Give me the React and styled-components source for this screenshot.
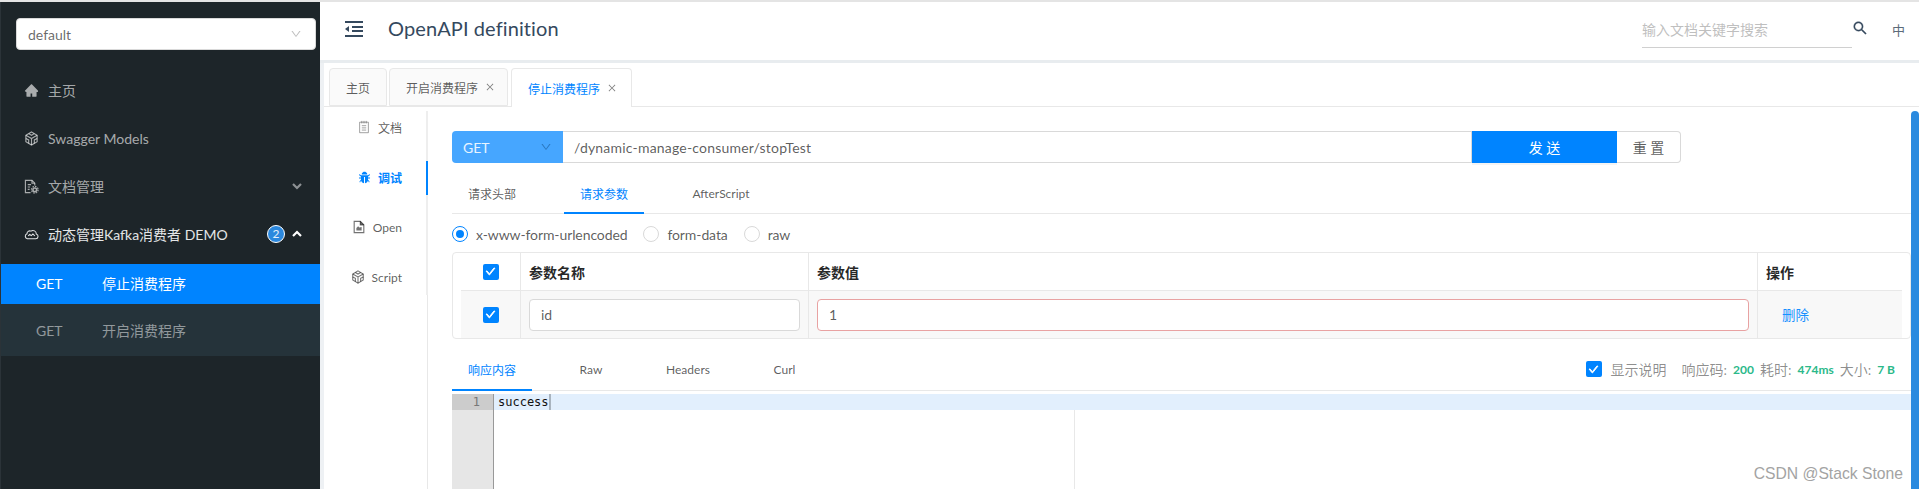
import React from 'react'
import styled, { createGlobalStyle } from 'styled-components'
import {
  AiFillHome,
  AiFillBug,
  AiOutlineDown,
  AiOutlineClose,
  AiOutlineCheck,
  AiOutlineSearch,
} from 'react-icons/ai'

const GlobalStyle = createGlobalStyle`
  html, body {
    margin: 0;
    height: 489px;
    overflow: hidden;
    background: #fff;
  }
  body {
    font-family: Lato, 'Noto Sans CJK SC', sans-serif;
    font-size: 14px;
    color: rgba(0, 0, 0, 0.65);
  }
  * { box-sizing: border-box; }
`

/* drawn icons, the packages have nothing close to these */
const HexIcon = ({ size = 15 }) => (
  <svg width={size} height={size} viewBox="0 0 16 16" fill="none" stroke="currentColor" strokeWidth="1.2">
    <path d="M8 1l6 3.5v7L8 15l-6-3.5v-7z" />
    <path d="M2 4.5L8 8l6-3.5M8 8v7M5 2.8l3 1.8 3-1.8M5 13.2V9.5L2 8M11 13.2V9.5L14 8" />
  </svg>
)

const DocGearIcon = () => (
  <svg width="15" height="15" viewBox="0 0 16 16" fill="none" stroke="currentColor" strokeWidth="1.2">
    <path d="M7 14.5H1.5v-13h7l3 3V7" />
    <path d="M8.5 1.5v3h3M4 6h3.5M4 8.5h2.5M4 11h2" />
    <circle cx="11.5" cy="11.5" r="2" strokeWidth="1.6" />
    <circle cx="11.5" cy="11.5" r="3.6" strokeWidth="1.2" strokeDasharray="1.6 1.2" />
  </svg>
)

const CloudIcon = () => (
  <svg width="15" height="15" viewBox="0 0 16 16" fill="none" stroke="currentColor" strokeWidth="1.1">
    <path d="M3.5 12.5h9a2.6 2.6 0 0 0 .6-5.1 3.6 3.6 0 0 0-5.7-3 3 3 0 0 0-4.2 2.9 2.7 2.7 0 0 0 .3 5.2z" />
    <path d="M4.5 9.5L6.2 8l1.6 1.2L9.5 7.4l2 2.1" />
  </svg>
)

const DocLinesIcon = () => (
  <svg width="14" height="14" viewBox="0 0 16 16" fill="none" stroke="currentColor" strokeWidth="1" opacity="0.75">
    <path d="M3 2.5h10v12H3z" />
    <path d="M5.5 1v3M8 1v3M10.5 1v3M5.5 6.5h5M5.5 9h5M5.5 11.5h5" />
  </svg>
)

const DocFoldIcon = () => (
  <svg width="14" height="14" viewBox="0 0 16 16" fill="none" stroke="currentColor" strokeWidth="1.3">
    <path d="M2.5 1.5h7l4 4v9h-11z" />
    <path d="M9.5 1.5v4h4" fill="currentColor" />
    <path d="M5 12V9l2-2 1.5 1.5L11 8v4z" fill="currentColor" stroke="none" />
  </svg>
)

const MenuFoldIcon = () => (
  <svg width="18" height="16" viewBox="0 0 18 16" fill="none" stroke="currentColor" strokeWidth="2">
    <path d="M0 1h18M7 6h11M7 10h11M0 15h18" />
    <path d="M4 5v6L0 8z" fill="currentColor" stroke="none" />
  </svg>
)

const Chevron = ({ up }) => (
  <svg width="10" height="8" viewBox="0 0 10 8" fill="none" stroke="currentColor" strokeWidth="2.2">
    <polyline points={up ? '1,6 5,2 9,6' : '1,2 5,6 9,2'} />
  </svg>
)

const Page = styled.div`
  position: relative;
  height: 489px;
  border-top: 2px solid #e4e4e4;
  display: flex;
  overflow: hidden;
`

/* sidebar */
const Sidebar = styled.aside`
  width: 320px;
  flex: none;
  background: #1d2529;
  border-left: 1px solid #2b3338;
`

const SelectBox = styled.div`
  height: 32px;
  margin: 16px 4px 0 15px;
  padding: 0 13px 0 11px;
  background: #fff;
  border: 1px solid #d9d9d9;
  border-radius: 4px;
  display: flex;
  align-items: center;
  justify-content: space-between;
  color: rgba(0, 0, 0, 0.6);
  svg { color: #bfbfbf; font-size: 12px; }
`

const Menu = styled.nav`
  margin: 17px 0 5px;
`

const MenuItem = styled.div`
  height: 48px;
  display: flex;
  align-items: center;
  padding: 0 18px 2px 23px;
  color: ${({ $open }) => ($open ? '#e4e6e7' : 'rgba(255, 255, 255, 0.62)')};
  > svg:first-child { margin-right: 9px; flex: none; }
`

const HomeIcon = styled(AiFillHome)`
  font-size: 15px;
`

const MenuLabel = styled.span`
  flex: 1;
  white-space: nowrap;
`

const Badge = styled.span`
  width: 18px;
  height: 18px;
  margin-right: 7px;
  border-radius: 50%;
  background: #2b88de;
  border: 1px solid #fff;
  color: #e4f0fb;
  font-size: 12px;
  line-height: 16px;
  text-align: center;
`

const Caret = styled.span`
  display: flex;
  color: ${({ $light }) => ($light ? '#fff' : '#8d9194')};
`

const SubItem = styled.div`
  display: flex;
  align-items: center;
  padding: 0 0 ${({ $active }) => ($active ? '2px' : '0')} 35px;
  height: ${({ $active }) => ($active ? '40px' : '52px')};
  background: ${({ $active }) => ($active ? '#0084ff' : '#25333a')};
  color: ${({ $active }) => ($active ? '#fff' : 'rgba(255, 255, 255, 0.5)')};
`

const SubMethod = styled.span`
  width: 66px;
`

/* main column */
const Main = styled.main`
  flex: 1;
  min-width: 0;
  display: flex;
  flex-direction: column;
`

const Header = styled.header`
  height: 61px;
  flex: none;
  border-bottom: 3px solid #e8ecef;
  display: flex;
  align-items: center;
  padding: 0 14px 0 25px;
  color: #35495e;
  > svg:first-child { margin-right: 25px; margin-bottom: 4px; flex: none; }
`

const Title = styled.h1`
  flex: 1;
  margin: 0 0 6px;
  font-size: 20px;
  font-weight: 400;
  letter-spacing: 0.1px;
`

const SearchInput = styled.div`
  align-self: flex-start;
  width: 210px;
  height: 30px;
  margin-top: 16px;
  border-bottom: 1px solid #d0d0d0;
  color: #bfbfbf;
  line-height: 24px;
`

const SearchIcon = styled(AiOutlineSearch)`
  font-size: 16px;
  margin: 0 24px 6px 0;
  flex: none;
  stroke: currentColor;
  stroke-width: 25;
`

const Lang = styled.span`
  font-size: 13px;
  margin-bottom: 4px;
  color: #5c6b7a;
`

const Workspace = styled.div`
  flex: 1;
  min-height: 0;
  border-left: 4px solid #eef1f4;
  display: flex;
  flex-direction: column;
`

const TabBar = styled.div`
  height: 44px;
  flex: none;
  padding: 5px 0 0 5px;
  display: flex;
  gap: 2px;
  border-bottom: 1px solid #e8e8e8;
`

const PageTab = styled.div`
  height: ${({ $active }) => ($active ? '39px' : '38px')};
  padding: 0 ${({ $active, $closable }) => ($active ? '14px' : $closable ? '12px' : '16px')} 0 16px;
  margin-left: ${({ $active }) => ($active ? '1px' : '0')};
  display: flex;
  align-items: center;
  gap: 7px;
  font-size: 12px;
  border: 1px solid #e8e8e8;
  border-bottom: ${({ $active }) => ($active ? '0' : '1px solid #e8e8e8')};
  border-radius: 4px 4px 0 0;
  background: ${({ $active }) => ($active ? '#fff' : '#fafafa')};
  color: ${({ $active }) => ($active ? '#0084ff' : 'rgba(0, 0, 0, 0.65)')};
  svg { font-size: 10px; color: rgba(0, 0, 0, 0.5); }
`

const Body = styled.div`
  flex: 1;
  min-height: 0;
  display: flex;
  padding-top: 4px;
`

const SideTabs = styled.div`
  width: 104px;
  flex: none;
  border-right: 1px solid #e8e8e8;
`

const SideList = styled.div`
  display: flex;
  flex-direction: column;
  gap: 16px;
  margin-right: -1px;
  border-right: 2px solid #eeeeee;
`

const SideTab = styled.div`
  height: 34px;
  margin-right: -2px;
  padding: 0 24px 2px 0;
  display: flex;
  align-items: center;
  justify-content: flex-end;
  gap: 7px;
  font-size: 12px;
  font-weight: ${({ $active }) => ($active ? 700 : 400)};
  border-right: 2px solid ${({ $active }) => ($active ? '#0084ff' : 'transparent')};
  color: ${({ $active }) => ($active ? '#0084ff' : 'rgba(0, 0, 0, 0.65)')};
  svg { font-size: 13px; flex: none; color: ${({ $active }) => ($active ? '#0084ff' : 'rgba(0, 0, 0, 0.55)')}; }
`

const Pane = styled.section`
  flex: 1;
  min-width: 0;
  padding: 20px 8px 0 24px;
  display: flex;
  flex-direction: column;
`

const RequestBar = styled.div`
  display: flex;
  height: 32px;
  margin-right: 230px;
`

const MethodSelect = styled.div`
  width: 111px;
  padding: 0 11px;
  display: flex;
  align-items: center;
  justify-content: space-between;
  background: #46a6ff;
  border-radius: 4px 0 0 4px;
  color: #e8f4ff;
  svg { font-size: 12px; color: #2b78c0; }
`

const UrlInput = styled.div`
  flex: 1;
  padding-left: 11px;
  display: flex;
  align-items: center;
  letter-spacing: 0.2px;
  border: 1px solid #d9d9d9;
  border-left: 0;
`

const SendButton = styled.div`
  width: 145px;
  background: #0084ff;
  color: #fff;
  display: flex;
  align-items: center;
  justify-content: center;
  white-space: pre;
  box-shadow: 0 2px 0 rgba(0, 0, 0, 0.045);
`

const ResetButton = styled.div`
  width: 64px;
  border: 1px solid #d9d9d9;
  border-left: 0;
  border-radius: 0 4px 4px 0;
  display: flex;
  align-items: center;
  justify-content: center;
  white-space: pre;
`

const InnerTabs = styled.div`
  display: flex;
  gap: 32px;
  height: ${({ $low }) => ($low ? '43px' : '41px')};
  margin-top: ${({ $low }) => ($low ? '9px' : '10px')};
  border-bottom: 1px solid #e8e8e8;
  align-items: stretch;
`

const InnerTab = styled.div`
  width: ${({ $w }) => $w}px;
  padding-top: 1px;
  display: flex;
  align-items: center;
  justify-content: center;
  font-size: 12px;
  margin-bottom: -1px;
  border-bottom: 2px solid ${({ $active }) => ($active ? '#0084ff' : 'transparent')};
  color: ${({ $active }) => ($active ? '#0084ff' : 'rgba(0, 0, 0, 0.65)')};
`

const RadioRow = styled.div`
  height: 38px;
  padding-top: 2px;
  display: flex;
  align-items: center;
  gap: 16px;
  letter-spacing: -0.1px;
`

const RadioLabel = styled.label`
  display: flex;
  align-items: center;
  gap: 8px;
`

const RadioDot = styled.span`
  width: 16px;
  height: 16px;
  border-radius: 50%;
  border: 1px solid ${({ $on }) => ($on ? '#0084ff' : '#d9d9d9')};
  display: flex;
  align-items: center;
  justify-content: center;
  &::after {
    content: '';
    width: 8px;
    height: 8px;
    border-radius: 50%;
    background: ${({ $on }) => ($on ? '#0084ff' : 'transparent')};
  }
`

const ParamTable = styled.div`
  height: 87px;
  flex: none;
  border: 1px solid #e8e8e8;
  border-radius: 4px;
  padding: 0 8px;
  display: grid;
  grid-template-columns: 60px 288px 949px 1fr;
  grid-template-rows: 37px 48px;
`

const Cell = styled.div`
  display: flex;
  align-items: center;
  padding: ${({ $pad }) => ($pad ? '0 8px' : '0')};
  justify-content: ${({ $center }) => ($center ? 'center' : 'flex-start')};
  border-right: ${({ $last }) => ($last ? '0' : '1px solid #e8e8e8')};
  background: ${({ $row }) => ($row ? '#f8f8f8' : '#fff')};
  border-top: ${({ $row }) => ($row ? '1px solid #e8e8e8' : '0')};
`

const HeadText = styled.span`
  font-weight: 700;
  color: rgba(0, 0, 0, 0.85);
  font-size: 14px;
`

const CheckBox = styled.span`
  width: 16px;
  height: 16px;
  flex: none;
  border-radius: 2px;
  background: #0084ff;
  color: #fff;
  display: flex;
  align-items: center;
  justify-content: center;
  svg { font-size: 11px; stroke: currentColor; stroke-width: 90; }
`

const TextInput = styled.div`
  flex: 1;
  height: 32px;
  padding: 0 11px;
  display: flex;
  align-items: center;
  background: #fff;
  border: 1px solid ${({ $error }) => ($error ? '#e8a2a2' : '#d9d9d9')};
  border-radius: 4px;
`

const DeleteLink = styled.span`
  margin: 0 0 2px 16px;
  color: #1890ff;
  font-size: 13.5px;
`

const ResponseInfo = styled.div`
  margin-left: auto;
  padding-right: 16px;
  display: flex;
  align-items: center;
  font-size: 14px;
  color: rgba(0, 0, 0, 0.45);
`

const ShowLabel = styled.span`
  margin: 0 15px 0 9px;
`

const Stat = styled.span`
  margin: 0 6px;
  color: #2bb98a;
  font-size: 12px;
  font-weight: 700;
  &:last-child { margin-right: 0; }
`

const Editor = styled.div`
  flex: 1;
  min-height: 0;
  margin-top: 3px;
  position: relative;
  display: flex;
  font-family: 'DejaVu Sans Mono', monospace;
  font-size: 12px;
  line-height: 16px;
`

const Gutter = styled.div`
  width: 42px;
  flex: none;
  background: #e6e6e6;
  border-right: 1px solid #999;
`

const GutterLine = styled.div`
  height: 16px;
  background: #cccccc;
  text-align: right;
  padding-right: 13px;
  color: #777;
`

const CodeLine = styled.div`
  flex: 1;
  height: 16px;
  padding-left: 4px;
  background: #e2effd;
  color: #111;
`

const Cursor = styled.span`
  display: inline-block;
  width: 2px;
  height: 16px;
  vertical-align: top;
  background: #a9b4bf;
`

const PrintMargin = styled.div`
  position: absolute;
  top: 16px;
  bottom: 0;
  left: 622px;
  width: 1px;
  background: #e8e8e8;
`

const ScrollThumb = styled.div`
  position: absolute;
  top: 109px;
  right: 0;
  bottom: 0;
  width: 8px;
  background: #2a8adf;
  border-radius: 4px 4px 0 0;
`

const Watermark = styled.div`
  position: absolute;
  right: 16px;
  bottom: 6px;
  font-family: 'Liberation Sans', sans-serif;
  font-size: 15.7px;
  color: #a3a3a3;
`

export default function App() {
  return (
    <Page>
      <GlobalStyle />
      <Sidebar>
        <SelectBox>
          default
          <AiOutlineDown />
        </SelectBox>
        <Menu>
          <MenuItem>
            <HomeIcon />
            <MenuLabel>主页</MenuLabel>
          </MenuItem>
          <MenuItem>
            <HexIcon />
            <MenuLabel>Swagger Models</MenuLabel>
          </MenuItem>
          <MenuItem>
            <DocGearIcon />
            <MenuLabel>文档管理</MenuLabel>
            <Caret><Chevron /></Caret>
          </MenuItem>
          <MenuItem $open>
            <CloudIcon />
            <MenuLabel>动态管理Kafka消费者 DEMO</MenuLabel>
            <Badge>2</Badge>
            <Caret $light><Chevron up /></Caret>
          </MenuItem>
        </Menu>
        <SubItem $active>
          <SubMethod>GET</SubMethod>
          停止消费程序
        </SubItem>
        <SubItem>
          <SubMethod>GET</SubMethod>
          开启消费程序
        </SubItem>
      </Sidebar>

      <Main>
        <Header>
          <MenuFoldIcon />
          <Title>OpenAPI definition</Title>
          <SearchInput>输入文档关键字搜索</SearchInput>
          <SearchIcon />
          <Lang>中</Lang>
        </Header>
        <Workspace>
          <TabBar>
            <PageTab>主页</PageTab>
            <PageTab $closable>开启消费程序<AiOutlineClose /></PageTab>
            <PageTab $closable $active>停止消费程序<AiOutlineClose /></PageTab>
          </TabBar>
          <Body>
            <SideTabs>
              <SideList>
                <SideTab><DocLinesIcon />文档</SideTab>
                <SideTab $active><AiFillBug />调试</SideTab>
                <SideTab><DocFoldIcon />Open</SideTab>
                <SideTab><HexIcon size={14} />Script</SideTab>
              </SideList>
            </SideTabs>
            <Pane>
              <RequestBar>
                <MethodSelect>GET<AiOutlineDown /></MethodSelect>
                <UrlInput>/dynamic-manage-consumer/stopTest</UrlInput>
                <SendButton>发 送</SendButton>
                <ResetButton>重 置</ResetButton>
              </RequestBar>
              <InnerTabs>
                <InnerTab $w={80}>请求头部</InnerTab>
                <InnerTab $w={80} $active>请求参数</InnerTab>
                <InnerTab $w={90}>AfterScript</InnerTab>
              </InnerTabs>
              <RadioRow>
                <RadioLabel><RadioDot $on />x-www-form-urlencoded</RadioLabel>
                <RadioLabel><RadioDot />form-data</RadioLabel>
                <RadioLabel><RadioDot />raw</RadioLabel>
              </RadioRow>
              <ParamTable>
                <Cell $center><CheckBox><AiOutlineCheck /></CheckBox></Cell>
                <Cell $pad><HeadText>参数名称</HeadText></Cell>
                <Cell $pad><HeadText>参数值</HeadText></Cell>
                <Cell $pad $last><HeadText>操作</HeadText></Cell>
                <Cell $center $row><CheckBox><AiOutlineCheck /></CheckBox></Cell>
                <Cell $pad $row><TextInput>id</TextInput></Cell>
                <Cell $pad $row><TextInput $error>1</TextInput></Cell>
                <Cell $pad $row $last><DeleteLink>删除</DeleteLink></Cell>
              </ParamTable>
              <InnerTabs $low>
                <InnerTab $w={80} $active>响应内容</InnerTab>
                <InnerTab $w={54}>Raw</InnerTab>
                <InnerTab $w={76}>Headers</InnerTab>
                <InnerTab $w={53}>Curl</InnerTab>
                <ResponseInfo>
                  <CheckBox><AiOutlineCheck /></CheckBox>
                  <ShowLabel>显示说明</ShowLabel>
                  响应码:<Stat>200</Stat>
                  耗时:<Stat>474ms</Stat>
                  大小:<Stat>7 B</Stat>
                </ResponseInfo>
              </InnerTabs>
              <Editor>
                <Gutter><GutterLine>1</GutterLine></Gutter>
                <CodeLine>success<Cursor /></CodeLine>
                <PrintMargin />
              </Editor>
            </Pane>
          </Body>
        </Workspace>
      </Main>
      <ScrollThumb />
      <Watermark>CSDN @Stack Stone</Watermark>
    </Page>
  )
}
